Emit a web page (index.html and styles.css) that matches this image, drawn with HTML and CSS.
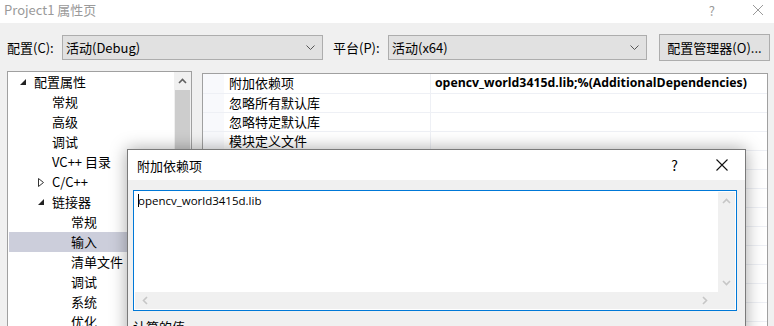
FILE: index.html
```html
<!DOCTYPE html>
<html lang="zh-CN">
<head>
  <meta charset="UTF-8">
  <title>Project1 属性页</title>
  <link rel="stylesheet" href="styles.css">
</head>
<body>

  <!-- Window title -->
  <div class="titlebar">
    <span class="title">Project1 属性页</span>
    <span class="help">?</span>
    <svg class="close" width="12" height="12" viewBox="0 0 12 12"><path d="M1 1L11 11M11 1L1 11" stroke="#9a9a9a" stroke-width="1"/></svg>
  </div>

  <!-- Configuration row -->
  <div class="toolbar">
    <span class="label">配置(C):</span>
    <div class="select sel-config">
      <span>活动(Debug)</span>
      <svg width="9" height="5" viewBox="0 0 9 5"><path d="M0.5 0.5L4.5 4.5L8.5 0.5" fill="none" stroke="#555" stroke-width="1"/></svg>
    </div>
    <span class="label label-platform">平台(P):</span>
    <div class="select sel-platform">
      <span>活动(x64)</span>
      <svg width="9" height="5" viewBox="0 0 9 5"><path d="M0.5 0.5L4.5 4.5L8.5 0.5" fill="none" stroke="#555" stroke-width="1"/></svg>
    </div>
    <div class="button">配置管理器(O)...</div>
  </div>

  <div class="panels">
    <!-- Tree -->
    <div class="tree">
      <div class="tree-items">
        <div class="node lvl0"><svg class="tri" width="6" height="6" viewBox="0 0 6 6"><path d="M6 0V6H0Z" fill="#222"/></svg>配置属性</div>
        <div class="node lvl1">常规</div>
        <div class="node lvl1">高级</div>
        <div class="node lvl1">调试</div>
        <div class="node lvl1">VC++ 目录</div>
        <div class="node lvl1"><svg class="tri" width="6" height="9" viewBox="0 0 6 9"><path d="M0.5 0.5L5.5 4.5L0.5 8.5Z" fill="none" stroke="#333" stroke-width="1"/></svg>C/C++</div>
        <div class="node lvl1"><svg class="tri" width="6" height="6" viewBox="0 0 6 6"><path d="M6 0V6H0Z" fill="#222"/></svg>链接器</div>
        <div class="node lvl2">常规</div>
        <div class="node lvl2 selected">输入</div>
        <div class="node lvl2">清单文件</div>
        <div class="node lvl2">调试</div>
        <div class="node lvl2">系统</div>
        <div class="node lvl2">优化</div>
      </div>
      <div class="vscroll">
        <div class="arrow">
          <svg width="9" height="6" viewBox="0 0 9 6"><path d="M1 5L4.5 1.5L8 5" fill="none" stroke="#606060" stroke-width="1.6"/></svg>
        </div>
        <div class="thumb"></div>
      </div>
    </div>

    <!-- Property grid -->
    <div class="grid">
      <div class="row"><div class="gutter"></div><div class="name">附加依赖项</div><div class="value">opencv_world3415d.lib;%(AdditionalDependencies)</div></div>
      <div class="row"><div class="gutter"></div><div class="name">忽略所有默认库</div><div class="value"></div></div>
      <div class="row"><div class="gutter"></div><div class="name">忽略特定默认库</div><div class="value"></div></div>
      <div class="row"><div class="gutter"></div><div class="name">模块定义文件</div><div class="value"></div></div>
      <div class="row"><div class="gutter"></div><div class="name"></div><div class="value"></div></div>
      <div class="row"><div class="gutter"></div><div class="name"></div><div class="value"></div></div>
      <div class="row"><div class="gutter"></div><div class="name"></div><div class="value"></div></div>
      <div class="row"><div class="gutter"></div><div class="name"></div><div class="value"></div></div>
      <div class="row"><div class="gutter"></div><div class="name"></div><div class="value"></div></div>
      <div class="row"><div class="gutter"></div><div class="name"></div><div class="value"></div></div>
      <div class="row"><div class="gutter"></div><div class="name"></div><div class="value"></div></div>
      <div class="row"><div class="gutter"></div><div class="name"></div><div class="value"></div></div>
      <div class="row"><div class="gutter"></div><div class="name"></div><div class="value"></div></div>
    </div>
  </div>

  <!-- Edit dialog -->
  <div class="dialog">
    <div class="dlg-title">
      <span class="dlg-caption">附加依赖项</span>
      <span class="dlg-help">?</span>
      <svg class="dlg-close" width="12" height="12" viewBox="0 0 12 12"><path d="M0.5 0.5L11.5 11.5M11.5 0.5L0.5 11.5" stroke="#111" stroke-width="1.1"/></svg>
    </div>
    <div class="dlg-body">
      <div class="editbox">
        <div class="edit-main">
          <div class="edit-text"><span class="caret"></span>opencv_world3415d.lib</div>
          <div class="edit-vscroll">
            <svg width="9" height="6" viewBox="0 0 9 6"><path d="M1 5L4.5 1.5L8 5" fill="none" stroke="#c6c6c6" stroke-width="1.6"/></svg>
            <svg width="9" height="6" viewBox="0 0 9 6"><path d="M1 1L4.5 4.5L8 1" fill="none" stroke="#c6c6c6" stroke-width="1.6"/></svg>
          </div>
        </div>
        <div class="edit-hscroll">
          <svg width="6" height="9" viewBox="0 0 6 9"><path d="M5 1L1.5 4.5L5 8" fill="none" stroke="#c6c6c6" stroke-width="1.6"/></svg>
          <svg class="right" width="6" height="9" viewBox="0 0 6 9"><path d="M1 1L4.5 4.5L1 8" fill="none" stroke="#c6c6c6" stroke-width="1.6"/></svg>
          <div class="corner"></div>
        </div>
      </div>
      <div class="computed">计算的值</div>
    </div>
  </div>

</body>
</html>
```

FILE: styles.css
```css
body {
  margin: 0;
  width: 774px;
  height: 326px;
  overflow: hidden;
  background-color: #f0f0f0;
  color: #000;
  font-family: "Noto Sans CJK SC", "Noto Sans", sans-serif;
  font-size: 13px;
  position: relative;
}

/* Title bar */
.titlebar {
  height: 23px;
  background-color: #fff;
  display: flex;
  align-items: center;
}
.title {
  margin-left: 4px;
  color: #9a9a9a;
  font-size: 13px;
  line-height: 20px;
  margin-top: -3px;
}
.help {
  margin-left: auto;
  color: #9a9a9a;
  font-size: 13px;
  margin-top: -3px;
}
.close {
  margin-left: 37px;
  margin-right: 10px;
  margin-top: -3px;
}

/* Config row */
.toolbar {
  display: flex;
  align-items: center;
  padding-top: 12px;
  height: 25px;
}
.label {
  margin-left: 7px;
  width: 55px;
}
.label-platform {
  margin-left: 10px;
}
.select {
  box-sizing: border-box;
  height: 25px;
  border: 1px solid #adadad;
  background-color: #e1e1e1;
  display: flex;
  align-items: center;
  padding-left: 3px;
  padding-right: 7px;
  justify-content: space-between;
}
.sel-config { width: 261px; }
.sel-platform { width: 259px; }
.button {
  box-sizing: border-box;
  margin-left: 12px;
  width: 111px;
  height: 27px;
  border: 1px solid #adadad;
  background-color: #e1e1e1;
  display: flex;
  align-items: center;
  justify-content: center;
}

/* Panels */
.panels {
  display: flex;
  align-items: flex-start;
  margin-top: 11px;
}
.tree {
  box-sizing: border-box;
  margin-left: 7px;
  width: 185px;
  height: 300px;
  border: 1px solid #a0a0a0;
  background-color: #fff;
  display: flex;
}
.tree-items {
  flex: 1;
  padding-left: 1px;
}
.node {
  height: 20px;
  line-height: 20px;
  display: flex;
  align-items: center;
  white-space: nowrap;
}
.node.lvl0 { padding-left: 24px; }
.node.lvl1 { padding-left: 43px; }
.node.lvl2 { padding-left: 62px; }
.node .tri {
  margin-left: -14px;
  margin-right: 8px;
}
.node.lvl0 .tri { margin-left: -13px; }
.node.selected {
  background-color: #cccedb;
}
.vscroll {
  width: 17px;
  background-color: #f0f0f0;
}
.vscroll .arrow {
  height: 18px;
  display: flex;
  align-items: center;
  justify-content: center;
}
.vscroll .thumb {
  margin: 0 1px;
  height: 260px;
  background-color: #cdcdcd;
}

.grid {
  box-sizing: border-box;
  margin-left: 10px;
  margin-top: 2px;
  width: 566px;
  height: 300px;
  border: 1px solid #a0a0a0;
  background-color: #fff;
}
.row {
  display: flex;
  height: 19px;
  line-height: 18px;
  border-bottom: 1px solid #eef0f5;
  box-sizing: border-box;
}
.row:first-child { height: 20px; }
.gutter {
  width: 21px;
  background-color: #f8f9fc;
}
.name {
  width: 201px;
  padding-left: 5px;
  border-right: 1px solid #eef0f5;
  white-space: nowrap;
}
.value {
  flex: 1;
  padding-left: 4px;
  font-family: "Open Sans", sans-serif;
  font-weight: bold;
  font-size: 12.3px;
  white-space: nowrap;
}

/* Dialog over the page */
.dialog {
  position: absolute;
  left: 127px;
  top: 149px;
  width: 619px;
  height: 200px;
  box-sizing: border-box;
  border: 1px solid #7a7a7a;
  background-color: #f0f0f0;
  box-shadow: 0 0 16px rgba(0, 0, 0, 0.35);
}
.dlg-title {
  height: 30px;
  background-color: #fff;
  display: flex;
  align-items: center;
}
.dlg-caption {
  margin-left: 9px;
}
.dlg-help {
  margin-left: auto;
  font-size: 14px;
}
.dlg-close {
  margin-left: 38px;
  margin-right: 17px;
}
.dlg-body {
  padding: 10px 8px 0 5px;
}
.editbox {
  box-sizing: border-box;
  height: 121px;
  border: 1px solid #0078d7;
  padding: 1px;
  background-color: #fff;
  display: flex;
  flex-direction: column;
}
.edit-main {
  flex: 1;
  display: flex;
}
.edit-text {
  flex: 1;
  padding-left: 3px;
  padding-top: 1px;
  font-family: "Open Sans", sans-serif;
  font-size: 11.5px;
  line-height: 15px;
}
.caret {
  display: inline-block;
  width: 1px;
  height: 13px;
  background-color: #000;
  vertical-align: -2px;
  margin-right: -1px;
}
.edit-vscroll {
  width: 17px;
  background-color: #f0f0f0;
  display: flex;
  flex-direction: column;
  justify-content: space-between;
  align-items: center;
  padding: 6px 0 6px;
}
.edit-hscroll {
  height: 17px;
  background-color: #f0f0f0;
  display: flex;
  align-items: center;
  padding-left: 7px;
}
.edit-hscroll .right {
  margin-left: auto;
}
.edit-hscroll .corner {
  width: 17px;
  height: 17px;
  margin-left: 10px;
}
.computed {
  margin-top: 6px;
}
```
